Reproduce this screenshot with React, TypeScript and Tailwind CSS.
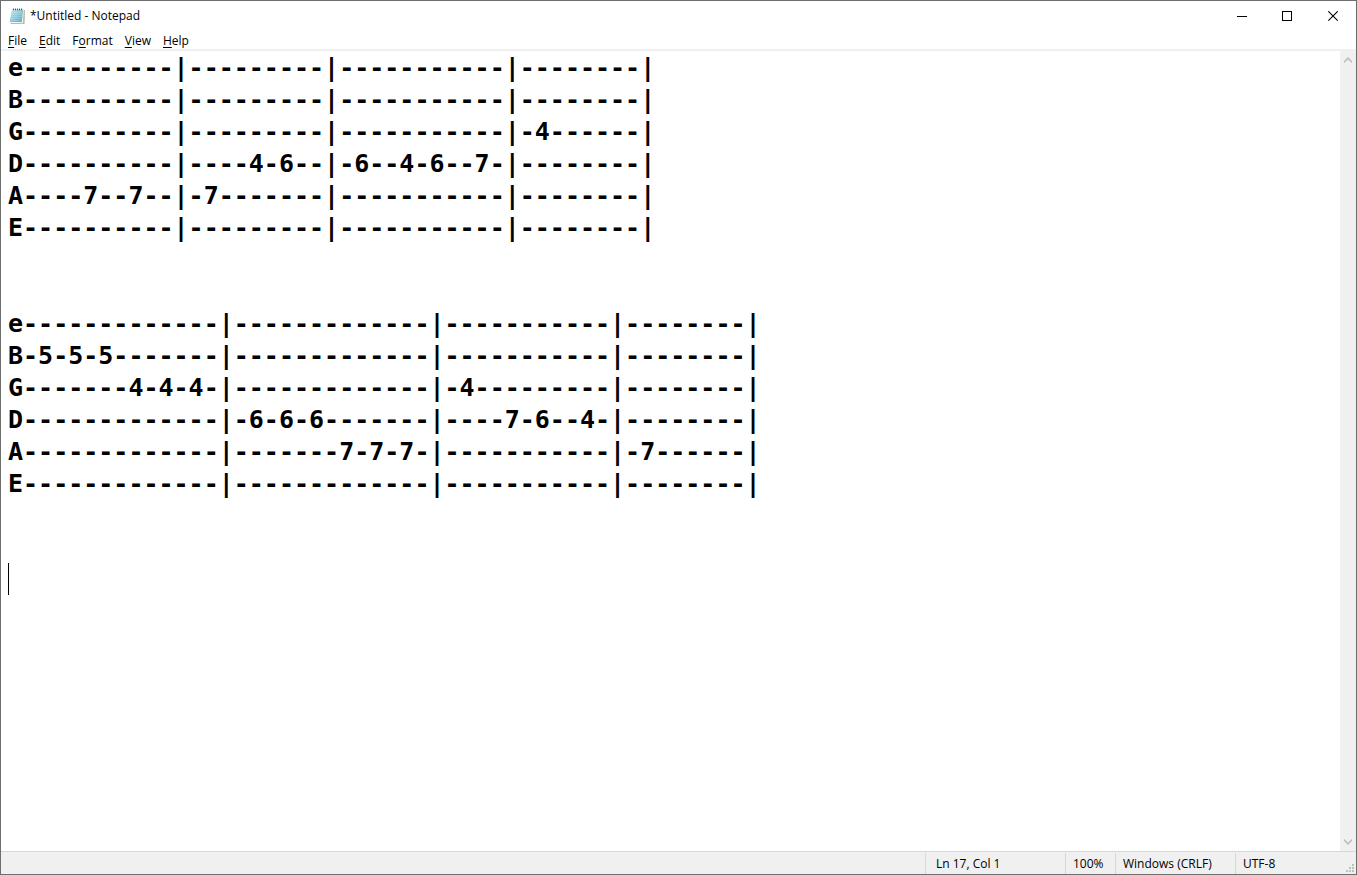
import React, { useState } from "react";

const menus = [
  { key: "F", before: "", after: "ile" },
  { key: "E", before: "", after: "dit" },
  { key: "o", before: "F", after: "rmat" },
  { key: "V", before: "", after: "iew" },
  { key: "H", before: "", after: "elp" },
];

const tab = `e----------|---------|-----------|--------|
B----------|---------|-----------|--------|
G----------|---------|-----------|-4------|
D----------|----4-6--|-6--4-6--7-|--------|
A----7--7--|-7-------|-----------|--------|
E----------|---------|-----------|--------|


e-------------|-------------|-----------|--------|
B-5-5-5-------|-------------|-----------|--------|
G-------4-4-4-|-------------|-4---------|--------|
D-------------|-6-6-6-------|----7-6--4-|--------|
A-------------|-------7-7-7-|-----------|-7------|
E-------------|-------------|-----------|--------|


`;

const NotepadIcon = () => (
  <svg width="16" height="16" viewBox="0 0 16 16" aria-hidden="true">
    <defs>
      <linearGradient id="page" x1="0" y1="0" x2="1" y2="1">
        <stop offset="0" stopColor="#c5e8f0" />
        <stop offset="0.5" stopColor="#8fcadb" />
        <stop offset="1" stopColor="#4fa6be" />
      </linearGradient>
    </defs>
    <path d="M3.5 2H15.8L15.5 15.8H2L0.8 14.5Z" fill="#b5a27a" />
    <path d="M3 1.5H14.9L14.2 15H0.5Z" fill="#eef3f3" />
    <path d="M3 1.5H14.2L12.8 14H0.6Z" fill="url(#page)" />
    <path
      d="M2.8 4.5H13.6M2.5 6.5H13.3M2.2 8.5H13M1.8 10.5H12.7M1.5 12.5H12.4"
      stroke="#e0f4f8"
      strokeWidth="0.2"
    />
    <path
      d="M4.5 0.6V2.2M6.5 0.6V2.2M8.5 0.6V2.2M10.5 0.6V2.2M12.5 0.6V2.2"
      stroke="#3f4f57"
      strokeWidth="1"
    />
  </svg>
);

const TitleBar = () => (
  <header className="flex h-[30px] shrink-0 items-center justify-between">
    <div className="flex items-center gap-[5px] pl-2">
      <NotepadIcon />
      <h1 className="whitespace-nowrap">*Untitled - Notepad</h1>
    </div>
    <div className="flex h-full">
      <button aria-label="Minimize" className="flex w-[46px] items-center justify-center">
        <svg width="11" height="11" shapeRendering="crispEdges">
          <path d="M1 5.5H11" stroke="#000" />
        </svg>
      </button>
      <button aria-label="Maximize" className="flex w-[46px] items-center justify-center">
        <svg width="11" height="11" shapeRendering="crispEdges">
          <path d="M0.5 0.5H9.5V9.5H0.5Z" fill="none" stroke="#000" />
        </svg>
      </button>
      <button aria-label="Close" className="flex w-[46px] items-center justify-center">
        <svg width="11" height="11">
          <path d="M0.3 0.3L9.7 9.7M9.7 0.3L0.3 9.7" stroke="#000" strokeWidth="1.1" />
        </svg>
      </button>
    </div>
  </header>
);

const MenuBar = () => (
  <nav className="flex h-[20px] shrink-0 items-end border-b-2 border-[#f0f0f0] pl-px">
    {menus.map((m) => (
      <button key={m.key} className="px-[6px]">
        {m.before}
        <span className="underline underline-offset-2">{m.key}</span>
        {m.after}
      </button>
    ))}
  </nav>
);

const ScrollBar = () => (
  <div className="flex w-4 shrink-0 flex-col justify-between bg-[#f0f0f0]">
    <button aria-label="Scroll up" className="flex h-[18px] items-center justify-center">
      <svg width="8" height="6" viewBox="0 0 8 6" fill="#bfbfbf">
        <path d="M0 4L4 0L8 4V6.2L4 2.6L0 6.2Z" />
      </svg>
    </button>
    <button aria-label="Scroll down" className="flex h-[18px] items-center justify-center">
      <svg width="8" height="6" viewBox="0 0 8 6" fill="#bfbfbf">
        <path d="M0 2L4 6L8 2V-0.2L4 3.4L0 -0.2Z" />
      </svg>
    </button>
  </div>
);

const StatusBar = () => (
  <footer className="flex h-[23px] shrink-0 justify-end border-t border-[#d7d7d7] bg-[#f0f0f0] pt-px leading-[22px]">
    <div className="w-[140px] border-l border-[#d7d7d7] pl-[10px]">Ln 17, Col 1</div>
    <div className="w-[50px] border-l border-[#d7d7d7] pl-[7px]">100%</div>
    <div className="w-[120px] border-l border-[#d7d7d7] pl-[7px]">Windows (CRLF)</div>
    <div className="flex w-[121px] justify-between border-l border-[#d7d7d7] pl-[7px]">
      <span>UTF-8</span>
      <svg
        width="10"
        height="10"
        fill="#bfbfbf"
        shapeRendering="crispEdges"
        aria-hidden="true"
        className="self-end"
      >
        <path d="M6 0h2v2h-2zM3 3h2v2h-2zM6 3h2v2h-2zM0 6h2v2h-2zM3 6h2v2h-2zM6 6h2v2h-2z" />
      </svg>
    </div>
  </footer>
);

const App = () => {
  const [text, setText] = useState(tab);

  return (
    <div className="flex h-screen flex-col border border-[#6e6e6e] bg-white font-['Open_Sans',sans-serif] text-[12px] leading-4 text-black">
      <TitleBar />
      <MenuBar />
      <main className="flex min-h-0 grow">
        <div className="relative flex grow">
          <textarea
            aria-label="Text editor"
            spellCheck={false}
            value={text}
            onChange={(e) => setText(e.target.value)}
            className="grow resize-none overflow-hidden whitespace-pre pt-px pl-[7px] font-['DejaVu_Sans_Mono',monospace] text-[25px] leading-8 font-bold outline-none"
          />
          <span className="absolute top-[512px] left-[7px] h-8 w-px bg-black" />
        </div>
        <ScrollBar />
      </main>
      <StatusBar />
    </div>
  );
};

export default App;
